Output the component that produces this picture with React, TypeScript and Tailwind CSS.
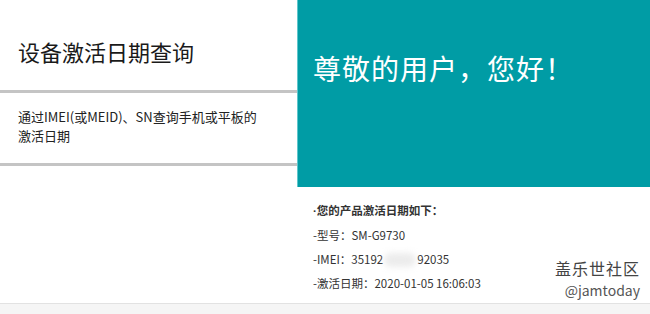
export default function App() {
  const font = { fontFamily: '"Noto Sans CJK SC", "Noto Sans", sans-serif' };
  return (
    <div className="w-[650px] h-[314px] bg-[#f5f5f5] overflow-hidden" style={font}>
      <div className="h-[304px] bg-white border-b border-[#e2e2e2] flex">
        <div className="w-[297px] flex flex-col">
          <div className="h-[90px] flex items-center pl-[18px] pt-[12px]">
            <h1 className="text-[22px] text-[#1a1a1a] leading-none">设备激活日期查询</h1>
          </div>
          <div className="h-[3px] bg-[#c4c4c4]" />
          <div className="h-[70px] pl-[18px] pt-[14px] text-[13px] leading-[19px] text-[#222]">
            通过IMEI(或MEID)、SN查询手机或平板的
            <br />
            激活日期
          </div>
          <div className="h-[3px] bg-[#c4c4c4]" />
        </div>
        <div className="flex-1 flex flex-col">
          <div className="h-[187px] bg-[#009ca5] border-l border-[#5fc7cc] pl-[15px] pt-[48px]">
            <p className="text-[28px] text-white leading-[40px] tracking-[1px]">尊敬的用户，您好！</p>
          </div>
          <div className="flex-1 flex pl-[16px] pt-[15px]">
            <div className="flex-1 flex flex-col gap-[7px] text-[11.5px] leading-[17px] text-[#333]">
              <p className="font-bold">
                <span style={{ fontFamily: '"Liberation Sans", sans-serif' }}>·</span>您的产品激活日期如下：
              </p>
              <p>-型号：SM-G9730</p>
              <p className="flex items-center">
                -IMEI：35192
                <span className="inline-block w-[32px] h-[14px] rounded-full bg-[#ececec] blur-[3px] mx-[1px]" />
                92035
              </p>
              <p>-激活日期：2020-01-05 16:06:03</p>
            </div>
            <div className="flex flex-col items-end justify-end pr-[10px] pb-[2px]">
              <span className="text-[16px] leading-[22px] text-[#444] tracking-[1px]">盖乐世社区</span>
              <span className="text-[14px] leading-[22px] text-[#555]">@jamtoday</span>
            </div>
          </div>
        </div>
      </div>
    </div>
  );
}
